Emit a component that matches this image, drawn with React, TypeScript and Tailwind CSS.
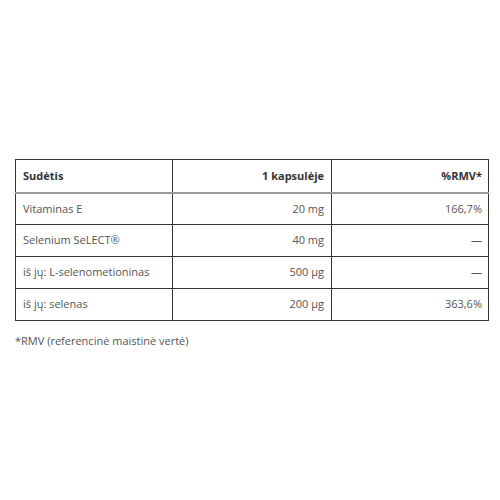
import React from "react";

const rows = [
  { name: "Vitaminas E", amount: "20 mg", rmv: "166,7%" },
  { name: "Selenium SeLECT®", amount: "40 mg", rmv: "—" },
  { name: "iš jų: L-selenometioninas", amount: "500 µg", rmv: "—" },
  { name: "iš jų: selenas", amount: "200 µg", rmv: "363,6%" },
];

export default function App() {
  return (
    <div
      className="w-[500px] h-[500px] bg-white pt-[159px] pl-[15px] text-[#555] text-[11px]"
      style={{ fontFamily: '"Open Sans", "Noto Sans", sans-serif' }}
    >
      <table className="w-[474px] border-collapse table-fixed border border-[#333]">
        <thead>
          <tr className="h-[33px] border-b-2 border-b-[#999]">
            <th className="w-[157px] border-r border-[#333] px-[7px] text-left font-bold text-[#333]">
              Sudėtis
            </th>
            <th className="w-[159px] border-r border-[#333] px-[7px] text-right font-bold text-[#333]">
              1 kapsulėje
            </th>
            <th className="px-[6px] text-right font-bold text-[#333]">%RMV*</th>
          </tr>
        </thead>
        <tbody>
          {rows.map((r) => (
            <tr key={r.name} className="h-[32px] border-b border-[#333]">
              <td className="border-r border-[#333] px-[7px] text-left">{r.name}</td>
              <td className="border-r border-[#333] px-[7px] text-right">{r.amount}</td>
              <td className="px-[6px] text-right">{r.rmv}</td>
            </tr>
          ))}
        </tbody>
      </table>
      <p className="mt-[12px]">*RMV (referencinė maistinė vertė)</p>
    </div>
  );
}
